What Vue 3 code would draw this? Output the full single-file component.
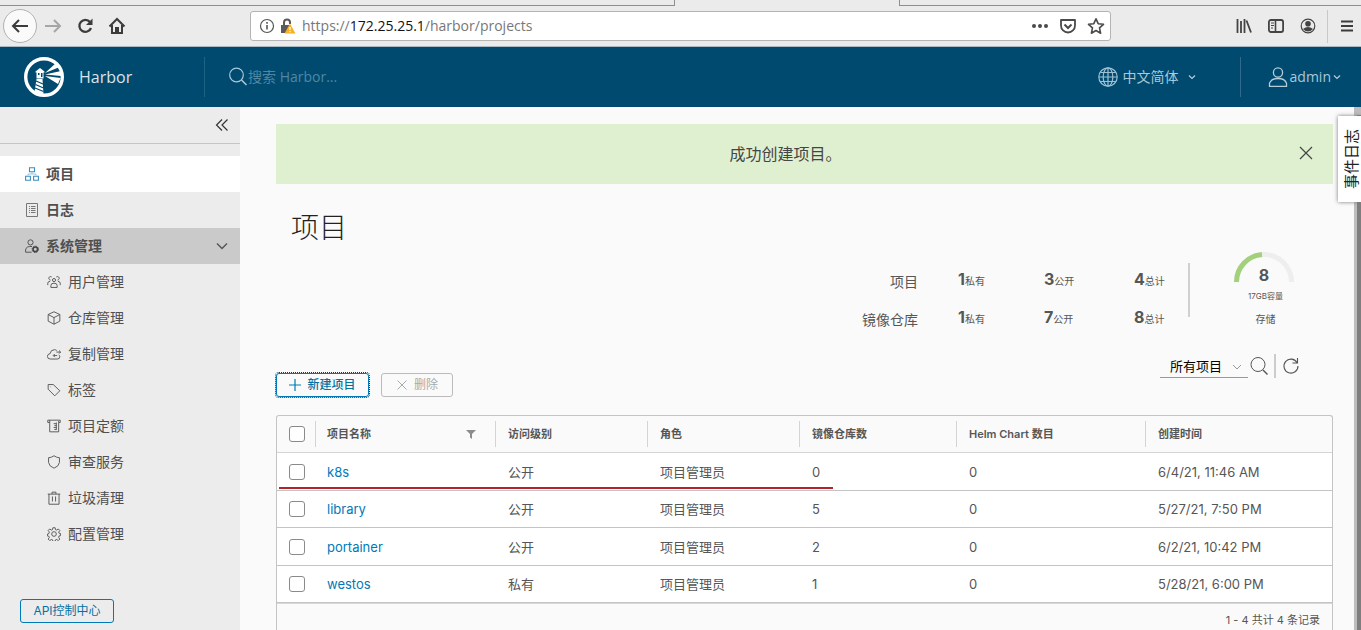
<script setup>
import { ref } from 'vue'

const subItems = [
  { label: '用户管理', icon: 'users' },
  { label: '仓库管理', icon: 'box' },
  { label: '复制管理', icon: 'cloud' },
  { label: '标签', icon: 'tag' },
  { label: '项目定额', icon: 'quota' },
  { label: '审查服务', icon: 'shield' },
  { label: '垃圾清理', icon: 'trash' },
  { label: '配置管理', icon: 'gear' },
]

const icons = {
  users: 'M9 13a4.500 4.500 0 1 1 3-8M27 13a4.500 4.500 0 1 0-3-8M18 17a4 4 0 1 0 0-8 4 4 0 0 0 0 8M10 32v-5q0-6 8-6t8 6v5zM2 26v-5q0-4 6-5M34 26v-5q0-4-6-5',
  box: 'M18 2l15 7v17l-15 8-15-8V9zM3 9l15 8 15-8M18 17v17',
  cloud: 'M30 20q3 2 3 5 0 6-7 6H9q-8 0-8-7 0-6 7-7 1-10 11-10 4 0 6 2M17 22h9M20 18l-4 4 4 4M24 13h11M31 9l4 4-4 4',
  tag: 'M3 4v12l17 17 13-13L16 4zM9 10h1',
  quota: 'M2 3h32v6h-4v24H7V9H2zM7 9V3M24 9v19M24 12h-7M24 17h-5M24 22h-7M24 27h-5M30 9V5',
  shield: 'M18 2q7 5 14 5v12q-1 10-14 15Q5 29 4 19V7q7 0 14-5z',
  trash: 'M2 8h32M5 8v26h26V8M13 8V3h10v5M14 14v13M22 14v13',
  gear: 'M15 2h6l1 5 3 1 4-3 4 4-3 4 1 3 4 1v5l-4 1-1 4 3 4-4 4-4-3-3 1-1 4h-6l-1-4-3-1-4 3-4-4 3-4-1-3-4-1v-5l4-1 1-4-3-4 4-4 4 3 3-1zM18 12a6 6 0 1 0 0 12 6 6 0 0 0 0-12',
}

const stats = [
  { label: '项目', values: [1, 3, 4] },
  { label: '镜像仓库', values: [1, 7, 8] },
]
const units = ['私有', '公开', '总计']

const columns = ['项目名称', '访问级别', '角色', '镜像仓库数', 'Helm Chart 数目', '创建时间']
const rows = [
  { name: 'k8s', access: '公开', role: '项目管理员', repos: 0, charts: 0, created: '6/4/21, 11:46 AM' },
  { name: 'library', access: '公开', role: '项目管理员', repos: 5, charts: 0, created: '5/27/21, 7:50 PM' },
  { name: 'portainer', access: '公开', role: '项目管理员', repos: 2, charts: 0, created: '6/2/21, 10:42 PM' },
  { name: 'westos', access: '私有', role: '项目管理员', repos: 1, charts: 0, created: '5/28/21, 6:00 PM' },
]
const selected = ref([])
const filter = ref('all')
</script>

<template>
  <div class="window">
    <div class="tabs"><div class="tab-left"></div><div class="tab-active"></div><div class="tab-right"></div></div>
    <div class="toolbar">
      <div class="nav">
        <button class="back" aria-label="Back"><svg viewBox="0 0 18 18" width="18" height="18"><path d="M17 9H2M8 3L2 9l6 6" fill="none" stroke="#3c3c3c" stroke-width="2" /></svg></button>
        <button aria-label="Forward"><svg viewBox="0 0 18 18" width="18" height="18"><path d="M1 9h15M10 3l6 6-6 6" fill="none" stroke="#a6a6a6" stroke-width="2" /></svg></button>
        <button aria-label="Reload"><svg viewBox="0 0 18 18" width="18" height="18"><path d="M14 5a6 6 0 1 0 1 6" fill="none" stroke="#3c3c3c" stroke-width="2.3" /><path d="M16.500 1.500v6.500h-6.500z" fill="#3c3c3c" /></svg></button>
        <button aria-label="Home"><svg viewBox="0 0 18 18" width="18" height="18"><path d="M1.500 9.500L9 2l7.500 7.500M4 8v8h10V8" fill="none" stroke="#3c3c3c" stroke-width="2" /><path d="M7 10h4v6H7z" fill="#3c3c3c" /></svg></button>
      </div>
      <div class="address">
        <svg class="info" viewBox="0 0 16 16" width="16" height="16"><circle cx="8" cy="8" r="6.500" fill="none" stroke="#555" stroke-width="1.200" /><path d="M8 7v4.500M8 4v1.800" stroke="#555" stroke-width="1.600" /></svg>
        <svg viewBox="0 0 16 16" width="16" height="16"><path d="M4 7V4.500a3 3 0 0 1 6 0V6" fill="none" stroke="#5a5a5a" stroke-width="2" /><path d="M1 7h10v8H1z" fill="#5a5a5a" /><path d="M10 5.500l5.500 10h-11z" fill="#f8b026" /><path d="M10 9v3M10 13v1.300" stroke="#fff" stroke-width="1.300" /></svg>
        <span class="url">https://<b>172.25.25.1</b>/harbor/projects</span>
        <button aria-label="Page actions"><svg viewBox="0 0 18 18" width="18" height="18"><g fill="#4a4a4a"><circle cx="3" cy="9" r="2" /><circle cx="9" cy="9" r="2" /><circle cx="15" cy="9" r="2" /></g></svg></button>
        <button aria-label="Pocket"><svg viewBox="0 0 18 18" width="18" height="18"><path d="M2 3h14v5.500a7 7 0 0 1-14 0z" fill="none" stroke="#4a4a4a" stroke-width="1.800" stroke-linejoin="round" /><path d="M5.500 7.500L9 11l3.500-3.500" fill="none" stroke="#4a4a4a" stroke-width="2" /></svg></button>
        <button aria-label="Bookmark"><svg viewBox="0 0 18 18" width="18" height="18"><path d="M9 1.800l2.200 4.900 5.300.6-4 3.600 1.100 5.300L9 13.500l-4.600 2.700 1.100-5.300-4-3.600 5.300-.6z" fill="none" stroke="#4a4a4a" stroke-width="1.600" stroke-linejoin="round" /></svg></button>
      </div>
      <div class="tools">
        <button aria-label="Library"><svg viewBox="0 0 18 18" width="18" height="18"><path d="M2.500 2v14M6 4v12M9.500 2v14M11.500 3.500L16 15.500" fill="none" stroke="#444" stroke-width="1.800" /></svg></button>
        <button aria-label="Sidebar"><svg viewBox="0 0 18 18" width="18" height="18"><rect x="1.900" y="3" width="14.200" height="12" rx="2" fill="none" stroke="#444" stroke-width="1.800" /><path d="M8.500 3v12" stroke="#444" stroke-width="1.600" /><path d="M4 6h3M4 8.500h3M4 11h2" stroke="#444" /></svg></button>
        <button aria-label="Account"><svg viewBox="0 0 18 18" width="18" height="18"><circle cx="9" cy="9" r="6.800" fill="none" stroke="#444" stroke-width="1.200" /><circle cx="9" cy="6.800" r="2.800" fill="#444" /><path d="M4 12q5-4 10 0-5 5-10 0z" fill="#444" /></svg></button>
      </div>
      <button class="menu" aria-label="Menu"><svg viewBox="0 0 14 14" width="14" height="14"><path d="M1 2.500h12M1 7h12M1 11.500h12" stroke="#3c3c3c" stroke-width="1.800" /></svg></button>
    </div>

    <header class="header">
      <a href="#" class="brand">
        <svg viewBox="0 0 40 40" width="40" height="40">
          <circle cx="20" cy="20" r="18.300" fill="none" stroke="#fff" stroke-width="3.400" />
          <path d="M11.500 14.500l4.500-3.500 4.500 3.500v1h-1v6h-7v-6h-1z" fill="#fff" />
          <path d="M14 16h1.500v2H14zM17 16h1.500v4H17z" fill="#004a70" />
          <path d="M12.500 22h6l1 16-9-3z" fill="#fff" />
          <path d="M12 24l7 3M11.500 27.500l8 3.500M11 31l8.500 3.500" stroke="#004a70" stroke-width="1.300" />
          <path d="M21 16l10.500-9.500 3 4zM21 17.500l16-3.500v5zM21 19l15.500 2-2.500 6z" fill="#fff" />
        </svg>
        <span>Harbor</span>
      </a>
      <label class="search">
        <svg viewBox="0 0 20 20" width="20" height="20"><circle cx="8.500" cy="8" r="6.800" fill="none" stroke="#a9c8d8" stroke-width="1.200" /><path d="M13.500 13l5 5" stroke="#a9c8d8" stroke-width="1.600" /></svg>
        <input type="search" placeholder="搜索 Harbor..." aria-label="搜索 Harbor">
      </label>
      <button class="lang">
        <svg viewBox="0 0 20 20" width="20" height="20"><g fill="none" stroke="#9cc0d2" stroke-width="1.200"><circle cx="10" cy="10" r="9.200" /><ellipse cx="10" cy="10" rx="4.800" ry="9.200" /><path d="M10 1v18M1 10h18M2.500 5.500h15M2.500 14.500h15" /></g></svg>
        <span>中文简体</span>
        <svg class="caret" viewBox="0 0 8 8" width="8" height="8"><path d="M1 2.500l3 3 3-3" fill="none" stroke="#b3ced9" stroke-width="1.200" /></svg>
      </button>
      <button class="user">
        <svg viewBox="0 0 20 20" width="20" height="20"><g fill="none" stroke="#b3ced9" stroke-width="1.300"><circle cx="10" cy="5.500" r="4.600" /><path d="M1.500 19.300v-3Q3 11.500 10 11.500t8.500 4.800v3z" /></g></svg>
        <span>admin</span>
        <svg viewBox="0 0 8 8" width="8" height="8"><path d="M1 2.500l3 3 3-3" fill="none" stroke="#b3ced9" stroke-width="1.200" /></svg>
      </button>
    </header>

    <div class="body">
      <aside class="sidebar">
        <button class="collapse" aria-label="收起"><svg viewBox="0 0 14 14" width="14" height="14"><path d="M7 1.500L1.500 7 7 12.500M12.500 1.500L7 7l5.500 5.500" fill="none" stroke="#333" stroke-width="1.200" /></svg></button>
        <nav>
          <a href="#" class="item active">
            <svg viewBox="0 0 14 14" width="14" height="14"><path d="M4.500.7h5v4h-5zM.6 9.300h4.800v4H.6zM8.600 9.300h4.800v4H8.600z" fill="none" stroke="#3b8ec0" stroke-width="1.100" /><path d="M3 8.500V7h8v1.500M7 5v2" fill="none" stroke="#9cc4e0" /></svg>项目
          </a>
          <a href="#" class="item">
            <svg viewBox="0 0 14 14" width="14" height="14"><path d="M1.500.5h11v13h-11z" fill="none" stroke="#777" /><path d="M4 3.500h1M6 3.500h4.500M4 5.500h1M6 5.500h4.500M4 7.500h1M6 7.500h4.500M4 9.500h1M6 9.500h4.500" stroke="#777" /></svg>日志
          </a>
          <a href="#" class="item open">
            <svg viewBox="0 0 14 14" width="14" height="14"><path d="M5.500.8a2.600 2.600 0 1 0 0 5.200 2.600 2.600 0 0 0 0-5.200M7 7.500Q1 7 .6 11v2.200h6" fill="none" stroke="#555" /><circle cx="10.300" cy="10.300" r="2.300" fill="none" stroke="#444" stroke-width="1.600" /><circle cx="10.300" cy="10.300" r="3.200" fill="none" stroke="#444" stroke-dasharray="1.250 1.250" /></svg>系统管理
            <svg class="expander" viewBox="0 0 12 12" width="12" height="12"><path d="M1 3.500l5 5 5-5" fill="none" stroke="#555" stroke-width="1.400" /></svg>
          </a>
          <a v-for="s in subItems" :key="s.label" href="#" class="item sub">
            <svg viewBox="0 0 36 36" width="14" height="14"><path :d="icons[s.icon]" fill="none" stroke="#555" stroke-width="2.400" stroke-linejoin="round" /></svg>{{ s.label }}
          </a>
        </nav>
        <a href="#" class="api">API控制中心</a>
      </aside>

      <main class="main">
        <div class="alert" role="status">
          <span>成功创建项目。</span>
          <button aria-label="关闭"><svg viewBox="0 0 14 14" width="14" height="14"><path d="M1 1l12 12M13 1L1 13" stroke="#454545" stroke-width="1.200" /></svg></button>
        </div>
        <h1>项目</h1>
        <section class="summary">
          <div class="stats">
            <template v-for="s in stats" :key="s.label">
              <span class="stat-label">{{ s.label }}</span>
              <span v-for="(v, i) in s.values" :key="i" class="stat"><b>{{ v }}</b>{{ units[i] }}</span>
            </template>
          </div>
          <div class="gauge">
            <div class="dial">
              <svg viewBox="0 0 60 31" width="60" height="31"><path d="M2.500 30a27.500 27.500 0 0 1 55 0" fill="none" stroke="#eee" stroke-width="5" /><path d="M2.500 30a27.500 27.500 0 0 1 25.500-27.400" fill="none" stroke="#a3d07a" stroke-width="5" /></svg>
              <b>8</b>
            </div>
            <small>17GB容量</small>
            <span>存储</span>
          </div>
        </section>
        <div class="actions">
          <div class="buttons">
            <button class="btn primary"><svg viewBox="0 0 12 12" width="12" height="12"><path d="M6 0v12M0 6h12" stroke="#0079b8" stroke-width="1.200" /></svg>新建项目</button>
            <button class="btn" disabled><svg viewBox="0 0 12 12" width="12" height="12"><path d="M1.500 1.500l9 9M10.500 1.500l-9 9" stroke="#aaa" /></svg>删除</button>
          </div>
          <div class="filters">
            <div class="select">
              <select v-model="filter" aria-label="项目筛选"><option value="all">所有项目</option></select>
              <svg viewBox="0 0 10 10" width="10" height="10"><path d="M1 3l4 4 4-4" fill="none" stroke="#999" /></svg>
            </div>
            <button aria-label="搜索"><svg viewBox="0 0 20 20" width="20" height="20"><circle cx="9" cy="8.500" r="7" fill="none" stroke="#555" /><path d="M14 14l4.500 4.500" stroke="#555" stroke-width="1.400" /></svg></button>
            <button class="refresh" aria-label="刷新"><svg viewBox="0 0 18 18" width="18" height="18"><path d="M15 5.500a7 7 0 1 0 1 3.500M15.500 1v5h-5" fill="none" stroke="#555" stroke-width="1.100" /></svg></button>
          </div>
        </div>
        <div class="grid">
          <table>
            <colgroup><col class="c0"><col class="c1"><col class="c2"><col class="c2"><col class="c4"><col class="c5"><col></colgroup>
            <thead>
              <tr>
                <th><input type="checkbox" aria-label="全选"></th>
                <th v-for="(c, i) in columns" :key="c" scope="col">
                  <div class="head">{{ c }}<button v-if="i === 0" aria-label="过滤"><svg viewBox="0 0 10 10" width="10" height="10"><path d="M0 1h10L6 5v5L4 8.500V5z" fill="#8c8c8c" /></svg></button></div>
                </th>
              </tr>
            </thead>
            <tbody>
              <tr v-for="r in rows" :key="r.name">
                <td><input v-model="selected" type="checkbox" :value="r.name" :aria-label="r.name"></td>
                <td><a href="#">{{ r.name }}</a></td>
                <td>{{ r.access }}</td>
                <td>{{ r.role }}</td>
                <td>{{ r.repos }}</td>
                <td>{{ r.charts }}</td>
                <td>{{ r.created }}</td>
              </tr>
            </tbody>
          </table>
          <div class="footer">1 - 4 共计 4 条记录</div>
          <div class="mark"></div>
        </div>
      </main>
      <div class="scrollbar"><div class="thumb"></div></div>
      <button class="events"><span>事件日志</span></button>
    </div>
  </div>
</template>

<style>
body { margin: 0; }
</style>

<style scoped>
* { box-sizing: border-box; }
svg { display: block; flex: none; }
a { text-decoration: none; color: inherit; }
button { font: inherit; color: inherit; background: none; border: 0; padding: 0; display: flex; align-items: center; justify-content: center; }
.window { height: 100vh; overflow: hidden; display: flex; flex-direction: column; font: 13px/20px Inter, "Noto Sans CJK SC", sans-serif; color: #565656; background: #fafafa; }

.tabs { display: flex; height: 6px; background: #ebebeb; flex: none; }
.tab-left { flex: 675; border-bottom: 1px solid #8f8f8f; border-right: 1px solid #8f8f8f; }
.tab-active { flex: 224; }
.tab-right { flex: 462; border-bottom: 1px solid #8f8f8f; border-left: 1px solid #8f8f8f; }
.toolbar { height: 41px; flex: none; display: flex; align-items: center; background: #ebebeb; border-bottom: 1px solid #a9bac4; }
.nav { display: flex; align-items: center; gap: 14px; width: 250px; padding-left: 3px; }
.nav .back { width: 34px; height: 34px; border: 1px solid #b1b1b1; border-radius: 50%; background: #fafafa; }
.nav .back + button { margin-left: -7px; }
.address { flex: 1; max-width: 861px; height: 30px; display: flex; align-items: center; gap: 10px; padding: 0 5px 0 8px; background: #fff; border: 1px solid #b4b4b4; border-radius: 3px; }
.address svg.info { margin-right: -5px; }
.url { flex: 1; margin-left: -4px; font-family: "Open Sans", sans-serif; font-size: 14px; color: #777; }
.url b { font-weight: 400; color: #111; }
.tools { margin-left: auto; display: flex; gap: 14px; padding-right: 10px; height: 33px; border-right: 1px solid #c8c8c8; }
.menu { width: 14px; margin: 0 7px 0 12px; }

.header { height: 60px; flex: none; display: flex; align-items: center; background: #004a70; color: #a9c8d8; font-family: "Open Sans", "Noto Sans CJK SC", sans-serif; font-size: 14px; }
.brand { width: 205px; height: 40px; padding-left: 24px; display: flex; align-items: center; gap: 15px; font-size: 16px; color: #d9e4ea; border-right: 1px solid #1f6285; }
.search { display: flex; align-items: center; margin-left: 23px; flex: 1; }
.search input { border: 0; background: none; padding: 0; width: 200px; font: inherit; color: #fff; outline: 0; }
.search input::placeholder { color: #4f87a3; opacity: 1; }
.lang { gap: 5px; height: 40px; padding-right: 44px; border-right: 1px solid #2f6c8c; }
.lang .caret { margin-left: 4px; }
.user { gap: 2px; padding: 0 20px 0 27px; }

.body { flex: 1; min-height: 0; display: flex; position: relative; }
.sidebar { width: 240px; flex: none; background: #ececec; display: flex; flex-direction: column; }
.collapse { height: 37px; padding-right: 11px; justify-content: flex-end; border-bottom: 1px solid #c6c6c6; flex: none; }
nav { padding-top: 12px; }
.item { height: 36px; display: flex; align-items: center; gap: 7px; padding: 0 12px 0 25px; font-size: 14px; font-weight: 700; color: #4f4f4f; }
.item.active { background: #fff; }
.item.open { background: #cacaca; }
.item.sub { padding-left: 47px; font-weight: 400; }
.expander { margin-left: auto; }
.api { margin: auto auto 7px 20px; width: 94px; height: 24px; line-height: 22px; text-align: center; border: 1px solid #0079b8; border-radius: 3px; font-size: 12px; color: #0072a3; }

.main { flex: 1; min-width: 0; padding: 17px 21px 0 36px; display: flex; flex-direction: column; }
.main > * { flex: none; }
.alert { height: 60px; display: flex; align-items: center; padding: 0 20px 2px 0; background: #dff0d0; font-size: 16px; color: #454545; }
.alert span { flex: 1; text-align: center; padding: 2px 4px 0 0; }
h1 { margin: 26px 0 0 15px; font-size: 28px; line-height: 36px; font-weight: 200; color: #222; }
.summary { display: flex; justify-content: flex-end; margin-top: 6px; height: 78px; }
.stats { display: grid; grid-template-columns: 96px 86px 90px 54px; grid-auto-rows: 38px; align-items: center; height: 54px; border-right: 2px solid #d0d0d0; margin-top: 11px; }
.stat-label { font-size: 14px; text-align: right; padding-right: 40px; margin-left: -40px; white-space: nowrap; }
.stat { font-size: 10px; white-space: nowrap; padding-bottom: 4px; }
.stat b { font-size: 16px; }
.gauge { width: 60px; margin: 0 39px 0 44px; display: flex; flex-direction: column; align-items: center; }
.dial { position: relative; }
.dial b { position: absolute; left: 0; right: 0; bottom: -2px; text-align: center; font-size: 16px; }
.gauge small { font-size: 8px; line-height: 20px; margin-top: 3px; padding-left: 3px; white-space: nowrap; }
.gauge span { font-size: 10px; margin-top: 3px; padding-left: 3px; }
.actions { display: flex; justify-content: space-between; margin-top: 24px; }
.buttons { display: flex; gap: 12px; margin-top: 19px; height: 24px; }
.btn { width: 72px; height: 24px; gap: 6px; border: 1px solid #bbb; border-radius: 3px; font-size: 12px; color: #aaa; }
.btn.primary { width: 93px; border-color: #0079b8; color: #0072a3; outline: 1px dotted #003d66; font-weight: 500; }
.filters { display: flex; align-items: center; height: 24px; margin-right: 33px; }
.select { position: relative; width: 88px; margin-right: 1px; }
.select select { appearance: none; display: block; width: 100%; height: 24px; border: 0; border-bottom: 1px solid #999; background: none; padding: 0 10px; font: inherit; color: #000; border-radius: 0; }
.select svg { position: absolute; right: 6px; top: 8px; pointer-events: none; }
.refresh { height: 24px; margin-left: 5px; padding-left: 6px; border-left: 2px solid #ccc; }

.grid { position: relative; margin-top: 18px; border: 1px solid #c4c4c4; border-bottom: 0; border-radius: 3px 3px 0 0; min-height: 220px; }
table { width: 100%; border-spacing: 0; table-layout: fixed; }
.c0 { width: 38px; } .c1 { width: 180px; } .c2 { width: 152px; } .c4 { width: 157px; } .c5 { width: 189px; }
th { height: 37px; padding: 0; text-align: left; font-size: 11px; font-weight: 600; border-bottom: 1px solid #d4d4d4; }
.head { height: 26px; display: flex; align-items: center; justify-content: space-between; padding: 0 19px 0 11px; border-left: 1px solid #d4d4d4; }
th:nth-child(n+3) .head { padding-left: 12px; }
td { height: 38px; padding: 0 12px; background: #fff; border-bottom: 1px solid #c4c4c4; }
td:nth-child(n+3) { padding-left: 13px; }
tbody tr:nth-child(even) td { height: 37px; }
td a { color: #0079b8; }
input[type="checkbox"] { appearance: none; display: block; width: 16px; height: 16px; margin: 0 0 0 12px; border: 1px solid #8a8a8a; border-radius: 3px; background: #fff; }
td:first-child { padding: 0; }
.footer { border-top: 1px solid #d8d8d8; padding: 6px 12px; text-align: right; font-size: 11px; }
.mark { position: absolute; left: 2px; top: 71px; width: 554px; height: 2px; background: #b3242a; }

.scrollbar { width: 7px; flex: none; background: #bdbdbd; padding: 8px 0 0 3px; }
.thumb { height: 100%; background: #7e7e7e; }
.events { position: absolute; right: 0; top: 9px; width: 23px; height: 86px; background: #fff; box-shadow: 0 0 4px #777; color: #222; font-size: 15px; padding-left: 5px; }
.events span { writing-mode: vertical-rl; text-orientation: sideways; transform: rotate(180deg); }
</style>
